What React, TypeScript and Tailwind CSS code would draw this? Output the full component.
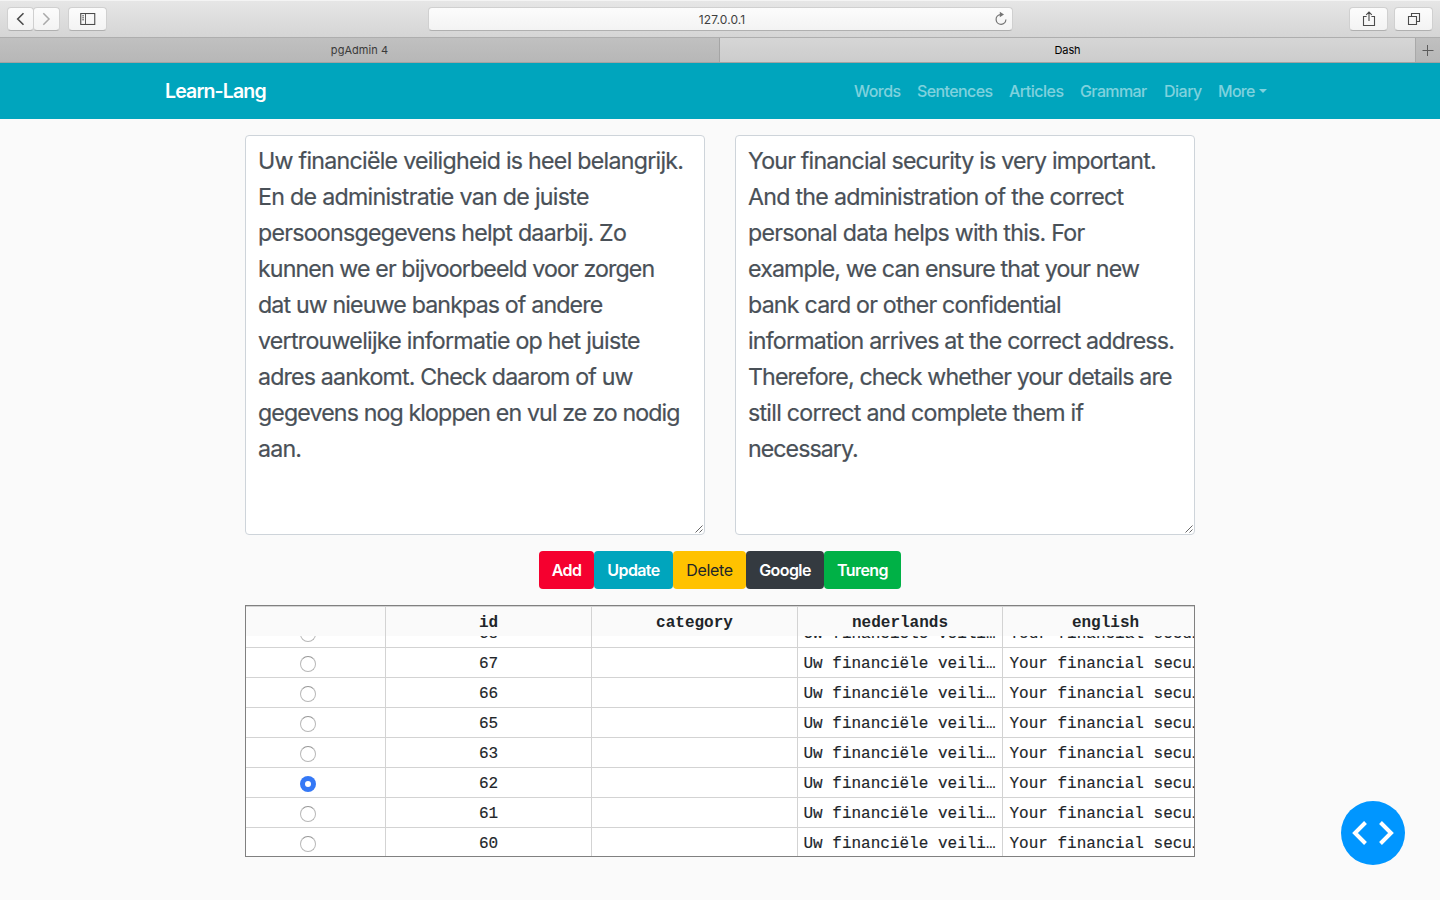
import React from "react";

const dutch: [string, string][] = [
  ["Uw financiële veiligheid is heel belangrijk.", "tracking-[-0.73px]"],
  ["En de administratie van de juiste", "tracking-[-0.71px]"],
  ["persoonsgegevens helpt daarbij. Zo", "tracking-[-0.75px]"],
  ["kunnen we er bijvoorbeeld voor zorgen", "tracking-[-0.89px]"],
  ["dat uw nieuwe bankpas of andere", "tracking-[-0.86px]"],
  ["vertrouwelijke informatie op het juiste", "tracking-[-0.74px]"],
  ["adres aankomt. Check daarom of uw", "tracking-[-0.84px]"],
  ["gegevens nog kloppen en vul ze zo nodig", "tracking-[-0.88px]"],
  ["aan.", "tracking-[-0.8px]"],
];

const english: [string, string][] = [
  ["Your financial security is very important.", "tracking-[-0.8px]"],
  ["And the administration of the correct", "tracking-[-0.73px]"],
  ["personal data helps with this. For", "tracking-[-0.75px]"],
  ["example, we can ensure that your new", "tracking-[-0.86px]"],
  ["bank card or other confidential", "tracking-[-0.79px]"],
  ["information arrives at the correct address.", "tracking-[-0.81px]"],
  ["Therefore, check whether your details are", "tracking-[-0.86px]"],
  ["still correct and complete them if", "tracking-[-0.73px]"],
  ["necessary.", "tracking-[-0.96px]"],
];

const toolButton =
  "flex h-[24px] items-center justify-center rounded-[4px] border border-[#d0d0d0] border-b-[#b0b0b0] bg-linear-to-b from-[#fcfcfc] to-[#f3f3f3]";

function Browser() {
  return (
    <header>
      <div className="flex h-[38px] items-start border-b border-[#aeaeae] border-t border-t-[#f4f4f4] bg-linear-to-b from-[#e6e6e6] to-[#d5d5d5] pt-[6px]">
        <div className="flex w-[428px] pl-[7px]">
          <div className={`${toolButton} w-[27px]`}>
            <svg width="25" height="22" viewBox="0 0 25 22" fill="none" stroke="#4b4b4b" strokeWidth="1.6">
              <path d="M15.5 5.2L9.7 11L15.5 16.8" />
            </svg>
          </div>
          <div className={`${toolButton} -ml-px w-[27px]`}>
            <svg width="25" height="22" viewBox="0 0 25 22" fill="none" stroke="#a9a9a9" strokeWidth="1.5">
              <path d="M9.3 5.2L15 11L9.3 16.8" />
            </svg>
          </div>
          <div className={`${toolButton} ml-[8px] w-[39px]`}>
            <svg width="16" height="12" viewBox="0 0 16 12" fill="none" stroke="#4b4b4b">
              <rect x="0.75" y="0.5" width="14" height="11" strokeWidth="1.1" />
              <path d="M5.5 0.5V11.5M2.2 2.8H4M2.2 4.8H4M2.2 6.8H4" strokeWidth="0.9" />
            </svg>
          </div>
        </div>
        <div className={`${toolButton} w-[585px] pl-[2px]`}>
          <span className="flex-1 pt-px pl-[20px] text-center text-[12px] tracking-[0.1px] text-[#3f3f3f]">127.0.0.1</span>
          <svg className="mr-[3px]" width="16" height="16" viewBox="0 0 16 16" fill="none" stroke="#747474" strokeWidth="1.2">
            <path d="M7.2 3.6A4.9 4.9 0 1 0 12.9 8.6" />
            <path d="M6.8 0.8L11 3.6L6.8 6.2Z" fill="#747474" stroke="none" />
          </svg>
        </div>
        <div className="flex flex-1 justify-end gap-[6px] pr-[7px]">
          <div className={`${toolButton} w-[39px]`}>
            <svg width="14" height="16" viewBox="0 0 14 16" fill="none" stroke="#4b4b4b" strokeWidth="1.1">
              <path d="M4.6 5.5H1.5V14.5H12.5V5.5H9.4M7 10V1M4.2 3.8L7 1L9.8 3.8" />
            </svg>
          </div>
          <div className={`${toolButton} w-[39px]`}>
            <svg width="14" height="14" viewBox="0 0 14 14" fill="none" stroke="#4b4b4b" strokeWidth="1.1">
              <path d="M1.5 4.5H9.5V12.5H1.5ZM4.5 4.2V1.5H12.5V9.5H9.8" />
            </svg>
          </div>
        </div>
      </div>
      <div className="flex h-[25px] border-b border-[#a3a3a3] bg-linear-to-b from-[#c0c0c0] to-[#b7b7b7] text-[11px]">
        <div className="flex w-[720px] items-center justify-center border-r border-[#a5a5a5] text-[#3a3a3a]">
          <span className="tracking-[0.05px]">pgAdmin 4</span>
        </div>
        <div className="flex w-[695px] items-center justify-center bg-linear-to-b from-[#d6d6d6] to-[#cccccc] text-black">
          <span className="tracking-[-0.1px]">Dash</span>
        </div>
        <div className="flex flex-1 items-center justify-center border-l border-[#a9a9a9]">
          <svg width="12" height="12" viewBox="0 0 12 12" stroke="#5c5c5c">
            <path d="M0.5 6.5H11.5M5.5 1V12" />
          </svg>
        </div>
      </div>
    </header>
  );
}

function Navbar() {
  return (
    <nav className="flex h-[56px] items-center bg-[#00a5bd] pr-[173px] pl-[165px] text-[16px] font-medium text-white/50">
      <a className="w-[102px] pt-[2px] text-[19.5px] font-semibold tracking-[-0.85px] whitespace-nowrap text-white">Learn-Lang</a>
      <div className="ml-auto flex items-center gap-[16px] whitespace-nowrap">
        <a className="w-[47px] tracking-[-0.55px]">Words</a>
        <a className="w-[76px] tracking-[-0.6px]">Sentences</a>
        <a className="w-[55px] tracking-[-0.5px]">Articles</a>
        <a className="w-[68px] tracking-[-0.6px]">Grammar</a>
        <a className="w-[38px] tracking-[-0.5px]">Diary</a>
        <a className="flex w-[49px] items-center justify-between tracking-[-0.7px]">
          More
          <i className="border-x-4 border-t-4 border-x-transparent border-t-white/50" />
        </a>
      </div>
    </nav>
  );
}

function TextBox({ lines }: { lines: [string, string][] }) {
  return (
    <div className="relative h-[400px] w-[460px] rounded-[4px] border border-[#ced4da] bg-white px-[12px] pt-[7px] text-[23.2px] leading-[36px] text-[#495057] [-webkit-text-stroke:0.2px_#495057]">
      {lines.map(([text, tracking]) => (
        <p key={text} className={`${tracking} whitespace-nowrap`}>
          {text}
        </p>
      ))}
      <svg className="absolute right-[1px] bottom-[1px]" width="8" height="8" viewBox="0 0 8 8" stroke="#555" strokeWidth="0.9">
        <path d="M0.5 7.5L7.5 0.5M4.5 7.5L7.5 4.5" />
      </svg>
    </div>
  );
}

const buttons: [string, string][] = [
  ["Add", "w-[55px] bg-[#f5002f] font-semibold text-white"],
  ["Update", "w-[79px] bg-[#00a5bd] font-semibold text-white"],
  ["Delete", "w-[73px] bg-[#ffc200] font-normal tracking-[-0.3px] text-[#212529]"],
  ["Google", "w-[78px] bg-[#343a40] font-semibold text-white"],
  ["Tureng", "w-[77px] bg-[#00b146] font-semibold text-white"],
];

const ids = [68, 67, 66, 65, 63, 62, 61, 60];
const columns = "grid w-[963px] grid-cols-[140px_206px_206px_205px_206px]";
const cell = "border-r border-[#d3d3d3]";

function Table() {
  return (
    <div className="h-[252px] w-[950px] overflow-hidden border border-[#808080] bg-white font-['Liberation_Mono',monospace] text-[16px] text-[#212529]">
      <div className={`${columns} relative z-10 h-[30px] grid-rows-[29px] border-t border-[#d3d3d3] bg-[#fafafa] text-center leading-[33px] font-bold`}>
        <span className={cell} />
        <span className={cell}>id</span>
        <span className={cell}>category</span>
        <span className={cell}>nederlands</span>
        <span className={cell}>english</span>
      </div>
      <div className="-mt-[18px]">
        {ids.map((id) => (
          <div
            key={id}
            className={`${columns} h-[30px] grid-rows-[29px] border-b border-[#d3d3d3] leading-[33px] whitespace-nowrap [-webkit-text-stroke:0.15px_#212529]`}
          >
            <span className={`${cell} flex pt-[8px] pl-[54px]`}>
              {id === 62 ? (
                <i className="flex size-[16px] items-center justify-center rounded-full bg-[#3478f6]">
                  <i className="size-[6px] rounded-full bg-white" />
                </i>
              ) : (
                <i className="size-[16px] rounded-full border border-[#b8b8b8] border-t-[#969696] bg-white" />
              )}
            </span>
            <span className={`${cell} text-center`}>{id}</span>
            <span className={cell} />
            <span className={`${cell} pl-[5.5px]`}>Uw financiële veili…</span>
            <span className={`${cell} pl-[6.5px]`}>Your financial secu…</span>
          </div>
        ))}
      </div>
    </div>
  );
}

export default function App() {
  return (
    <div className="relative h-[900px] w-[1440px] overflow-hidden bg-[#fafafa] font-['Inter','Liberation_Sans',sans-serif]">
      <Browser />
      <Navbar />
      <main className="flex flex-col items-center pt-[16px]">
        <div className="flex gap-[30px]">
          <TextBox lines={dutch} />
          <TextBox lines={english} />
        </div>
        <div className="mt-[16px] mb-[16px] flex h-[38px] tracking-[-0.6px]">
          {buttons.map(([label, style]) => (
            <button key={label} className={`${style} rounded-[4px] text-[16px]`}>
              {label}
            </button>
          ))}
        </div>
        <Table />
      </main>
      <div className="absolute top-[801px] left-[1341px] flex size-[64px] items-center justify-center rounded-full bg-[#0096ff]">
        <svg width="42" height="24" viewBox="0 0 42 24" fill="none" stroke="white" strokeWidth="4">
          <path d="M13.5 1.5L3 12L13.5 22.5M28.5 1.5L39 12L28.5 22.5" />
        </svg>
      </div>
    </div>
  );
}
